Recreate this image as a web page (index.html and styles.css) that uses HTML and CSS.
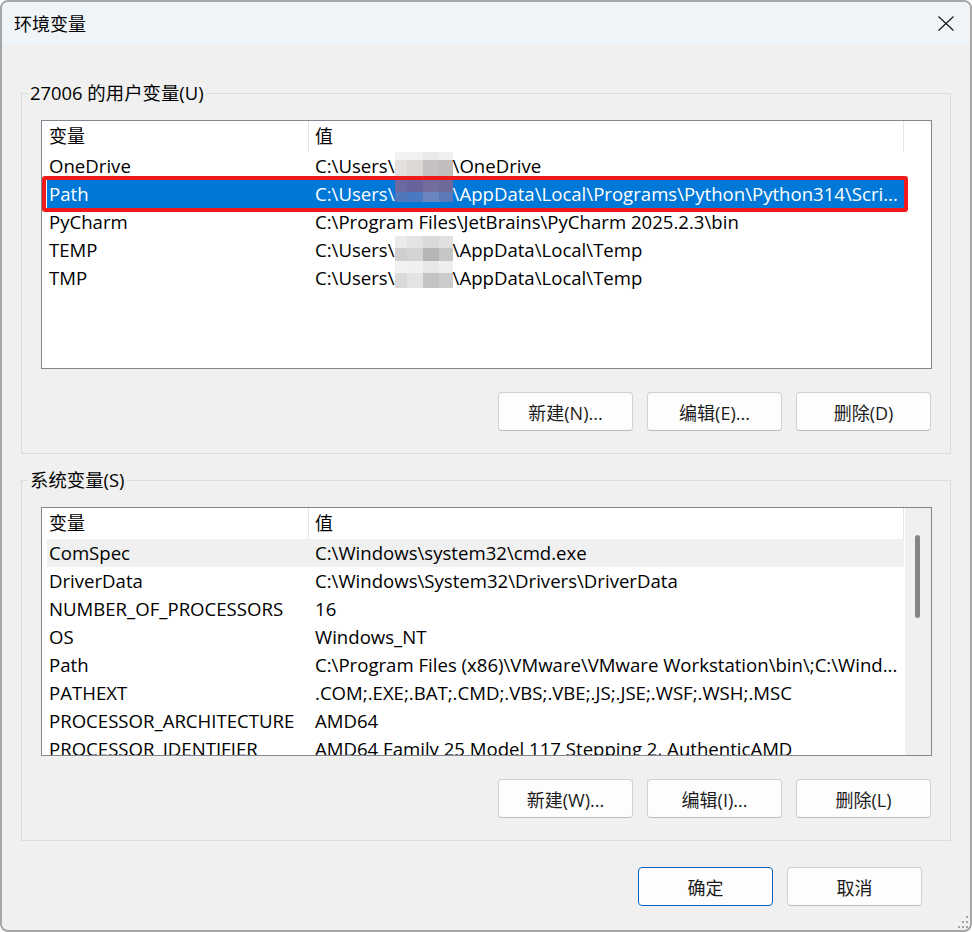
FILE: index.html
```html
<!DOCTYPE html>
<html lang="zh-CN">
<head>
  <meta charset="UTF-8">
  <title>环境变量</title>
  <link rel="stylesheet" href="styles.css">
</head>
<body>
  <div class="window">
    <div class="titlebar">
      <span class="title">环境变量</span>
      <button class="close" aria-label="关闭">
        <svg width="16" height="15" viewBox="0 0 16 15"><path d="M0.5 0.5L15.5 14.5M15.5 0.5L0.5 14.5" stroke="#1a1a1a" stroke-width="1.2" fill="none"/></svg>
      </button>
    </div>

    <main class="content">
      <fieldset class="group">
        <legend>27006 的用户变量(U)</legend>
        <div class="listbox">
          <div class="listbody">
            <div class="row head"><span>变量</span><span>值</span></div>
            <div class="row"><span>OneDrive</span><span>C:\Users\<i class="mask mask-a"></i>\OneDrive</span></div>
            <div class="row selected"><span>Path</span><span>C:\Users\<i class="mask mask-b"></i>\AppData\Local\Programs\Python\Python314\Scri...</span></div>
            <div class="row"><span>PyCharm</span><span>C:\Program Files\JetBrains\PyCharm 2025.2.3\bin</span></div>
            <div class="row"><span>TEMP</span><span>C:\Users\<i class="mask mask-c"></i>\AppData\Local\Temp</span></div>
            <div class="row"><span>TMP</span><span>C:\Users\<i class="mask mask-d"></i>\AppData\Local\Temp</span></div>
          </div>
          <div class="mark"></div>
        </div>
        <div class="actions">
          <button class="btn">新建(N)...</button>
          <button class="btn">编辑(E)...</button>
          <button class="btn">删除(D)</button>
        </div>
      </fieldset>

      <fieldset class="group">
        <legend>系统变量(S)</legend>
        <div class="listbox scroll">
          <div class="listbody">
            <div class="row head"><span>变量</span><span>值</span></div>
            <div class="row hover"><span>ComSpec</span><span>C:\Windows\system32\cmd.exe</span></div>
            <div class="row"><span>DriverData</span><span>C:\Windows\System32\Drivers\DriverData</span></div>
            <div class="row"><span>NUMBER_OF_PROCESSORS</span><span>16</span></div>
            <div class="row"><span>OS</span><span>Windows_NT</span></div>
            <div class="row"><span>Path</span><span>C:\Program Files (x86)\VMware\VMware Workstation\bin\;C:\Wind...</span></div>
            <div class="row"><span>PATHEXT</span><span>.COM;.EXE;.BAT;.CMD;.VBS;.VBE;.JS;.JSE;.WSF;.WSH;.MSC</span></div>
            <div class="row"><span>PROCESSOR_ARCHITECTURE</span><span>AMD64</span></div>
            <div class="row"><span>PROCESSOR_IDENTIFIER</span><span>AMD64 Family 25 Model 117 Stepping 2, AuthenticAMD</span></div>
          </div>
          <div class="scrollbar"><div class="thumb"></div></div>
        </div>
        <div class="actions">
          <button class="btn">新建(W)...</button>
          <button class="btn">编辑(I)...</button>
          <button class="btn">删除(L)</button>
        </div>
      </fieldset>
    </main>

    <div class="footer">
      <button class="btn primary">确定</button>
      <button class="btn">取消</button>
    </div>

    <svg class="grip" width="14" height="14" viewBox="0 0 14 14" fill="#a3a3a3">
      <rect x="10" y="0" width="2" height="2"/>
      <rect x="6" y="5" width="2" height="2"/><rect x="10" y="5" width="2" height="2"/>
      <rect x="2" y="10" width="2" height="2"/><rect x="6" y="10" width="2" height="2"/><rect x="10" y="10" width="2" height="2"/>
    </svg>
  </div>
</body>
</html>
```

FILE: styles.css
```css
:root {
  --face: #f0f0f0;
  --title: #eff4f9;
  --frame: #a6a6a6;
  --line: #dcdcdc;
  --list-border: #828790;
  --select: #0078d7;
}

body {
  margin: 0;
  background: #fff;
}

.window {
  position: relative;
  box-sizing: border-box;
  width: 972px;
  height: 932px;
  border: 2px solid var(--frame);
  border-radius: 8px;
  overflow: hidden;
  background: var(--face);
  font-family: "Open Sans", "Noto Sans CJK SC", sans-serif;
  font-size: 18px;
  color: #000;
}

.titlebar {
  display: flex;
  align-items: center;
  justify-content: space-between;
  height: 42px;
  padding-left: 12px;
  background: var(--title);
}

.close {
  display: flex;
  align-items: center;
  justify-content: center;
  width: 49px;
  height: 42px;
  padding: 0;
  border: none;
  background: none;
}

.content {
  padding: 37px 19px 0 19px;
}

.group {
  margin: 0;
  min-width: 0;
  padding: 15px 18px 22px 19px;
  border: 1px solid var(--line);
}

.group + .group {
  margin-top: 14px;
}

.group legend {
  margin-left: -13px;
  padding: 0 2px;
  line-height: 24px;
  font-size: 18.4px;
}

/* list view */
.listbox {
  position: relative;
  display: flex;
  box-sizing: border-box;
  height: 249px;
  border: 1px solid var(--list-border);
  background: #fff;
}

.listbody {
  flex: 1;
  min-width: 0;
  padding: 0 27px 0 5px;
  overflow: hidden;
}

.scroll .listbody {
  padding-right: 1px;
}

.row {
  display: grid;
  grid-template-columns: 262px 1fr;
  height: 28px;
  line-height: 28px;
  font-size: 18.6px;
  white-space: nowrap;
}

.row > span {
  overflow: hidden;
}

.row > span:first-child {
  padding-left: 2px;
}

.row > span:last-child {
  padding-left: 6px;
}

.row.head {
  height: 31px;
  line-height: 31px;
  font-size: 18px;
}

.row.head > span {
  border-right: 1px solid #e5e5e5;
}

.row.selected {
  background: var(--select);
  color: #fff;
}

.row.hover {
  background: #f0f0f0;
}

/* pixelated user name */
.mask {
  display: inline-block;
  width: 58px;
  height: 28px;
  vertical-align: top;
}

.mask-a {
  background:
    linear-gradient(to right, #f3f3f3 0 12px, #f1f1f1 12px 28px, #eaeaea 28px 44px, #efefef 44px) 0 0 / 100% 8px no-repeat,
    linear-gradient(to right, #e3e0dd 0 12px, #dcd8d5 12px 28px, #c5c1c0 28px 44px, #c1bdbd 44px) 0 8px / 100% 20px no-repeat;
}

.mask-b {
  background:
    linear-gradient(to right, #6b6aa0 0 12px, #67649c 12px 28px, #736d9d 28px 44px, #6d699b 44px) 0 0 / 100% 12px no-repeat,
    linear-gradient(to right, #4f77bc 0 12px, #4a79c2 12px 28px, #6b85c0 28px 44px, #5c7ab9 44px) 0 12px / 100% 10px no-repeat;
}

.mask-c {
  background:
    linear-gradient(to right, #ebebeb 0 12px, #e3e3e3 12px 28px, #d9d9d9 28px 44px, #e0e0e0 44px) 0 0 / 100% 12px no-repeat,
    linear-gradient(to right, #cfcfcf 0 12px, #d3d3d3 12px 28px, #b6b6b6 28px 44px, #c6c6c6 44px) 0 12px / 100% 13px no-repeat,
    linear-gradient(to right, #f2f2f2 0 12px, #f0f0f0 12px 28px, #e8e8e8 28px 44px, #eeeeee 44px) 0 25px / 100% 3px no-repeat;
}

.mask-d {
  background:
    linear-gradient(to right, #f2f2f2 0 12px, #f0f0f0 12px 28px, #e8e8e8 28px 44px, #eeeeee 44px) 0 0 / 100% 9px no-repeat,
    linear-gradient(to right, #d9d9d9 0 12px, #e3e3e3 12px 28px, #c3c3c3 28px 44px, #cbcbcb 44px) 0 9px / 100% 15px no-repeat;
}

/* red highlight box drawn over the Path row */
.mark {
  position: absolute;
  left: 0;
  top: 55px;
  box-sizing: border-box;
  width: 866px;
  height: 36px;
  border: 4px solid #f01a1a;
  border-radius: 3px;
  pointer-events: none;
}

.scrollbar {
  position: relative;
  width: 26px;
  background: #f0f0f0;
}

.thumb {
  position: absolute;
  left: 10px;
  top: 27px;
  width: 5px;
  height: 83px;
  border-radius: 3px;
  background: #858585;
}

/* buttons */
.actions {
  display: flex;
  justify-content: flex-end;
  gap: 14px;
  margin-top: 23px;
  padding-right: 1px;
}

.btn {
  box-sizing: border-box;
  width: 135px;
  height: 39px;
  padding: 0;
  border: 1px solid #d0d0d0;
  border-bottom-color: #bdbdbd;
  border-radius: 4px;
  background: #fdfdfd;
  font: inherit;
  color: #1b1b1b;
}

.btn.primary {
  border-color: #0067c0;
}

.footer {
  display: flex;
  justify-content: flex-end;
  gap: 14px;
  margin-top: 26px;
  padding-right: 48px;
}

.grip {
  position: absolute;
  right: 0;
  bottom: 0;
}
```
